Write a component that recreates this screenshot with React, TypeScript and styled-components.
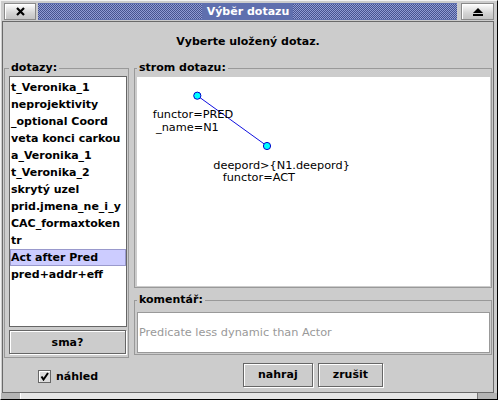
import React from "react";
import styled, { createGlobalStyle } from "styled-components";

const GlobalStyle = createGlobalStyle`
  html, body {
    margin: 0;
    padding: 0;
  }
  body {
    background: #cccccc;
    font-family: "DejaVu Sans", "Liberation Sans", sans-serif;
  }
  * {
    box-sizing: border-box;
  }
`;

const Window = styled.div`
  width: 498px;
  height: 400px;
  display: flex;
  flex-direction: column;
  background: #cccccc;
  border-top: 1px solid #f2f2f2;
  border-left: 1px solid #f2f2f2;
  border-right: 1px solid #000000;
  border-bottom: 1px solid #000000;
  font-family: "DejaVu Sans", "Liberation Sans", sans-serif;
  font-size: 11px;
  color: #000000;
`;

const TitleBar = styled.div`
  height: 20px;
  display: flex;
  align-items: flex-start;
  padding: 2px 3px 0 3px;
`;

const FrameButton = styled.div<{ $width: number }>`
  width: ${(p) => p.$width}px;
  height: 17px;
  display: flex;
  align-items: center;
  justify-content: center;
  border: 1px solid #8a8a8a;
  background: linear-gradient(#ffffff, #d4d4d4 60%, #c4c4c4);
  box-shadow: inset 1px 1px 0 #ffffff;
`;

const TitleStrip = styled.div`
  flex: 1;
  height: 17px;
  margin: 0 4px 0 2px;
  display: flex;
  background: #5f6fae;
`;

const Bumps = styled.div`
  flex: 1;
  margin: 1px 0;
  background: repeating-conic-gradient(#8f9bd4 0 25%, #46538f 0 50%) 0 0 / 2px 2px;
`;

const TitleText = styled.div`
  padding: 0 4px 0 5px;
  line-height: 17px;
  font-weight: bold;
  font-size: 11px;
  color: #ffffff;
`;

const Frame = styled.div`
  flex: 1;
  margin: 0 3px 0 1px;
  border: 1px solid #6a6a6a;
  display: flex;
  flex-direction: column;
`;

const Header = styled.div`
  height: 39px;
  display: flex;
  align-items: center;
  justify-content: center;
  font-weight: bold;
  font-size: 11px;
`;

const Body = styled.div`
  display: grid;
  grid-template-columns: 125px 358px;
  grid-template-rows: 297px 34px;
  column-gap: 5px;
  padding-left: 1px;
`;

const Group = styled.fieldset<{ $pad: string; $height: number }>`
  margin: 0;
  padding: ${(p) => p.$pad};
  height: ${(p) => p.$height}px;
  min-width: 0;
  border: 1px solid #999999;
  display: flex;
  flex-direction: column;
`;

const Legend = styled.legend`
  padding: 0 2px;
  font-weight: bold;
  font-size: 11px;
  line-height: 14px;
`;

const List = styled.div`
  height: 252px;
  padding-top: 2px;
  background: #ffffff;
  border: 1px solid #666666;
  overflow: hidden;
`;

const Item = styled.div<{ $selected?: boolean }>`
  height: 17px;
  line-height: 17px;
  padding-left: 1px;
  white-space: nowrap;
  font-weight: bold;
  font-size: 11px;
  background: ${(p) => (p.$selected ? "#ccccff" : "transparent")};
  box-shadow: ${(p) => (p.$selected ? "inset 0 0 0 1px #9999cc" : "none")};
`;

const Button = styled.button<{ $wide?: boolean }>`
  height: 24px;
  width: ${(p) => (p.$wide ? "117px" : "auto")};
  padding: 0 14px;
  margin: 0;
  border: 1px solid #666666;
  background: #cccccc;
  box-shadow: inset 1px 1px 0 #ffffff, 1px 1px 0 #ffffff;
  font-family: "DejaVu Sans", "Liberation Sans", sans-serif;
  font-weight: bold;
  font-size: 11px;
  color: #000000;
`;

const RightColumn = styled.div`
  display: flex;
  flex-direction: column;
  gap: 5px;
`;

const Canvas = styled.div`
  height: 209px;
  background: #ffffff;
  position: relative;
`;

const CommentField = styled.div`
  height: 41px;
  display: flex;
  align-items: center;
  padding-left: 1px;
  background: #ffffff;
  border: 1px solid #999999;
  color: #999999;
  font-size: 11.3px;
`;

const CheckCell = styled.label`
  display: flex;
  align-items: center;
  justify-content: center;
  gap: 5px;
  padding: 3px 0 0 3px;
  font-weight: bold;
  font-size: 11px;
`;

const CheckBox = styled.span`
  width: 13px;
  height: 13px;
  display: flex;
  align-items: center;
  justify-content: center;
  border: 1px solid #666666;
  background: #dcdcdc;
  box-shadow: inset 1px 1px 0 #ffffff;
`;

const ButtonRow = styled.div`
  display: flex;
  align-items: center;
  justify-content: center;
  gap: 5px;
  padding-bottom: 1px;
`;

const BottomEdge = styled.div`
  height: 6px;
  display: flex;
`;

const EdgeCorner = styled.div<{ $side: "left" | "right" }>`
  width: 20px;
  background: #b4b4b4;
  border-${(p) => (p.$side === "left" ? "right" : "left")}: 1px solid
    ${(p) => (p.$side === "left" ? "#ffffff" : "#777777")};
`;

const EdgeMiddle = styled.div`
  flex: 1;
  background: #e6e6e6;
`;

const queries = [
  "t_Veronika_1",
  "neprojektivity",
  "_optional Coord",
  "veta konci carkou",
  "a_Veronika_1",
  "t_Veronika_2",
  "skrytý uzel",
  "prid.jmena_ne_i_y",
  "CAC_formaxtoken",
  "tr",
  "Act after Pred",
  "pred+addr+eff",
];

const nodes = [
  { x: 60.3, y: 18.7, labels: [{ x: 15.7, y: 41.3, t: "functor=PRED" }, { x: 19, y: 53.7, t: "_name=N1" }] },
  { x: 130, y: 69, labels: [{ x: 76.3, y: 92, t: "deepord>{N1.deepord}" }, { x: 85.7, y: 104.3, t: "functor=ACT" }] },
];

const QueryTree = () => (
  <svg width="352" height="209" style={{ display: "block" }}>
    <line x1={nodes[0].x} y1={nodes[0].y} x2={nodes[1].x} y2={nodes[1].y} stroke="#1010e0" strokeWidth="1" />
    {nodes.map((n, i) => (
      <g key={i}>
        {n.labels.map((l) => (
          <text key={l.t} x={l.x} y={l.y} fontFamily="DejaVu Sans, sans-serif" fontSize="11.3" fill="#000">
            {l.t}
          </text>
        ))}
        <circle cx={n.x} cy={n.y} r="3.6" fill="#00ffff" stroke="#0000cc" strokeWidth="1" />
      </g>
    ))}
  </svg>
);

const App = () => {
  return (
    <>
      <GlobalStyle />
      <Window>
        <TitleBar>
          <FrameButton $width={32}>
            <svg width="9" height="9" viewBox="0 0 9 9">
              <path d="M1 1 L8 8 M8 1 L1 8" stroke="#000" strokeWidth="2.2" />
            </svg>
          </FrameButton>
          <TitleStrip>
            <Bumps />
            <TitleText>Výběr dotazu</TitleText>
            <Bumps />
          </TitleStrip>
          <FrameButton $width={33}>
            <svg width="10" height="8" viewBox="0 0 10 8">
              <path d="M5 0 L10 5 L0 5 Z" fill="#000" />
              <rect x="0" y="6" width="10" height="2" fill="#000" />
            </svg>
          </FrameButton>
        </TitleBar>
        <Frame>
          <Header>Vyberte uložený dotaz.</Header>
          <Body>
            <Group $pad="1px 1px 3px 4px" $height={297}>
              <Legend>dotazy:</Legend>
              <List>
                {queries.map((q) => (
                  <Item key={q} $selected={q === "Act after Pred"}>
                    {q}
                  </Item>
                ))}
              </List>
              <div style={{ height: 3 }} />
              <Button $wide>sma?</Button>
            </Group>
            <RightColumn>
              <Group $pad="2px 1px 1px 2px" $height={227}>
                <Legend>strom dotazu:</Legend>
                <Canvas>
                  <QueryTree />
                </Canvas>
              </Group>
              <Group $pad="5px 1px 1px 2px" $height={62}>
                <Legend>komentář:</Legend>
                <CommentField>Predicate less dynamic than Actor</CommentField>
              </Group>
            </RightColumn>
            <CheckCell>
              <CheckBox>
                <svg width="9" height="9" viewBox="0 0 9 9">
                  <path d="M1.5 4.5 L3.5 7.5 L8 1" stroke="#000" strokeWidth="2" fill="none" />
                </svg>
              </CheckBox>
              náhled
            </CheckCell>
            <ButtonRow>
              <Button>nahraj</Button>
              <Button>zrušit</Button>
            </ButtonRow>
          </Body>
        </Frame>
        <BottomEdge>
          <EdgeCorner $side="left" />
          <EdgeMiddle />
          <EdgeCorner $side="right" />
        </BottomEdge>
      </Window>
    </>
  );
};

export default App;
